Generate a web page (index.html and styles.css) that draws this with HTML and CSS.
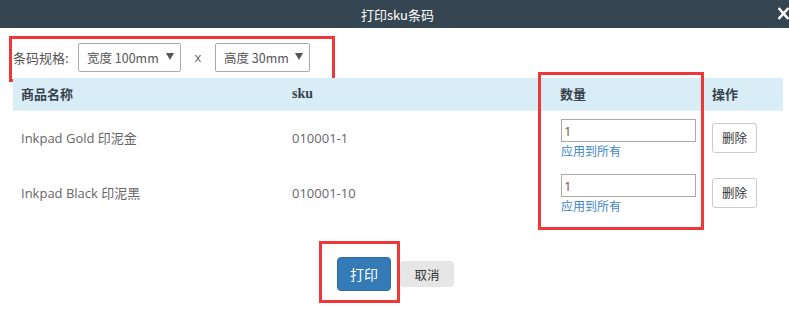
FILE: index.html
```html
<!DOCTYPE html>
<html lang="zh-CN">
<head>
<meta charset="utf-8">
<title>打印sku条码</title>
<link rel="stylesheet" href="styles.css">
</head>
<body>
<div class="dialog">
  <header class="titlebar">
    <span></span>
    <span class="title">打印sku条码</span>
    <span class="close"><svg width="12" height="13" viewBox="0 0 12 13"><path d="M1.5 1.5 L10.5 11.5 M10.5 1.5 L1.5 11.5" stroke="#fff" stroke-width="2.6" stroke-linecap="square"/></svg></span>
  </header>
  <div class="content">
    <div class="spec">
      <span class="spec-label">条码规格:</span>
      <div class="fake-select w1"><span>宽度 100mm</span><span class="arrow"></span></div>
      <span class="times">x</span>
      <div class="fake-select w2"><span>高度 30mm</span><span class="arrow"></span></div>
      <span class="mark mark-spec"></span>
    </div>
    <div class="table-wrap">
      <table class="sku-table">
        <colgroup>
          <col class="c1"><col class="c2"><col class="c3"><col class="c4">
        </colgroup>
        <thead>
          <tr><th>商品名称</th><th class="sku-h">sku</th><th>数量</th><th>操作</th></tr>
        </thead>
        <tbody>
          <tr>
            <td>Inkpad Gold 印泥金</td>
            <td>010001-1</td>
            <td class="qty"><input class="qty-input" type="text" value="1"><a class="apply">应用到所有</a></td>
            <td><button class="btn-del">删除</button></td>
          </tr>
          <tr>
            <td>Inkpad Black 印泥黑</td>
            <td>010001-10</td>
            <td class="qty"><input class="qty-input" type="text" value="1"><a class="apply">应用到所有</a></td>
            <td><button class="btn-del">删除</button></td>
          </tr>
        </tbody>
      </table>
      <span class="mark mark-qty"></span>
    </div>
    <div class="actions">
      <span class="print-wrap"><button class="btn-print">打印</button><span class="mark mark-print"></span></span>
      <button class="btn-cancel">取消</button>
    </div>
  </div>
</div>
</body>
</html>
```
FILE: styles.css
```css
* { box-sizing: border-box; }
html, body { margin: 0; padding: 0; background: #fff; }
body {
  width: 789px;
  height: 320px;
  overflow: hidden;
  font-family: "Open Sans", "Noto Sans CJK SC", sans-serif;
  font-size: 13px;
  color: #666;
}
.titlebar {
  height: 28px;
  background: #364552;
  display: grid;
  grid-template-columns: 1fr auto 1fr;
  align-items: center;
}
.title {
  color: #fff;
  font-size: 13px;
  padding-left: 6px;
  font-family: "Noto Sans CJK SC", sans-serif;
}
.close {
  justify-self: end;
  display: flex;
  align-items: center;
  width: 11px;
  overflow: hidden;
  margin-top: -1px;
}
.content { padding: 15px 6px 0 13px; }
.spec {
  position: relative;
  display: flex;
  align-items: center;
  height: 29px;
  margin-bottom: 6px;
}
.spec-label {
  width: 65px;
  color: #555;
  font-size: 13px;
  font-family: "Noto Sans CJK SC", sans-serif;
}
.fake-select {
  height: 29px;
  border: 1px solid #aaa;
  border-radius: 2px;
  display: flex;
  align-items: center;
  padding: 0 6px 0 8px;
  color: #555;
  font-size: 12.5px;
  font-family: "Noto Sans CJK SC", sans-serif;
  white-space: nowrap;
}
.fake-select.w1 { width: 103px; }
.fake-select.w2 { width: 95px; }
.arrow {
  margin-left: auto;
  width: 0;
  height: 0;
  border-left: 4px solid transparent;
  border-right: 4px solid transparent;
  border-top: 7px solid #555;
  margin-top: -3px;
}
.times { width: 34px; text-align: center; color: #666; font-size: 13px; margin-top: -2px; }
.mark {
  position: absolute;
  border: 3px solid #ef3737;
  pointer-events: none;
}
.mark-spec { left: -4px; top: -7px; width: 326px; height: 46px; }
.table-wrap { position: relative; width: 770px; }
.sku-table { width: 770px; border-collapse: collapse; table-layout: fixed; }
.c1 { width: 271px; } .c2 { width: 268px; } .c3 { width: 152px; } .c4 { width: 79px; }
.sku-table thead tr { background: #d9edf7; }
.sku-table th {
  height: 32px;
  padding: 0 0 0 8px;
  text-align: left;
  font-weight: bold;
  color: #37424c;
  font-size: 13px;
  font-family: "Noto Sans CJK SC", sans-serif;
  border-bottom: 1px solid #e2f1fb;
}
.sku-table th.sku-h { font-family: "Liberation Serif", serif; font-size: 14px; }
.sku-table td {
  height: 55px;
  padding: 0 0 0 8px;
  vertical-align: middle;
  color: #666;
  font-size: 13px;
}
.sku-table td.qty { padding-left: 9px; }
.qty-input {
  display: block;
  width: 135px;
  height: 23px;
  border: 1px solid #aaa;
  padding: 0 2px;
  font-family: "Open Sans", sans-serif;
  font-size: 13px;
  color: #6b5a4a;
  margin: 3px 0 0;
}
.apply {
  display: block;
  color: #3d85c6;
  font-size: 12px;
  line-height: 16px;
  margin-top: 1px;
  font-family: "Noto Sans CJK SC", sans-serif;
}
.btn-del {
  width: 45px;
  height: 30px;
  border: 1px solid #ccc;
  border-radius: 3px;
  background: #fff;
  color: #333;
  font-size: 12.5px;
  font-family: "Noto Sans CJK SC", sans-serif;
  padding: 0;
}
.mark-qty { left: 525px; top: -6px; width: 166px; height: 158px; }
.actions {
  display: flex;
  justify-content: center;
  align-items: center;
  gap: 9px;
  margin-top: 37px;
  padding-right: 5px;
}
.print-wrap { position: relative; display: flex; }
.btn-print {
  width: 54px;
  height: 34px;
  background: #337ab7;
  color: #fff;
  border: 1px solid #2e6da4;
  border-radius: 4px;
  font-size: 14px;
  font-family: "Noto Sans CJK SC", sans-serif;
  padding: 0;
}
.mark-print { left: -18px; top: -16px; width: 81px; height: 62px; }
.btn-cancel {
  width: 54px;
  height: 26px;
  background: #e6e6e6;
  color: #333;
  border: none;
  border-radius: 4px;
  font-size: 12.5px;
  font-family: "Noto Sans CJK SC", sans-serif;
  padding: 0;
}
```
